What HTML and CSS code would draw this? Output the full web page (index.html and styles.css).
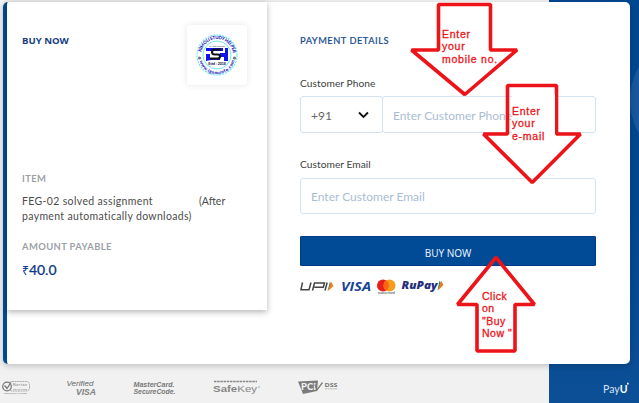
FILE: index.html
```html
<!DOCTYPE html>
<html lang="en">
<head>
    <meta charset="UTF-8">
    <meta name="viewport" content="width=device-width, initial-scale=1.0">
    <title>Payment</title>
    <link rel="stylesheet" href="styles.css">
</head>
<body>
    <div class="page">
        <div class="card">
            <div class="summary">
                <div class="summary-top">
                    <h1>BUY NOW</h1>
                    <div class="merchant-logo">
                        <svg width="42" height="42" viewBox="0 0 42 42">
                            <defs>
                                <path id="arc-top" d="M5 21a16 16 0 0 1 32 0"/>
                                <path id="arc-bottom" d="M2.8 22a18.2 18.2 0 0 0 36.4 0"/>
                            </defs>
                            <circle cx="21" cy="21" r="20" fill="none" stroke="#72e5f5" stroke-width="1.2" stroke-dasharray="2 1"/>
                            <circle cx="21" cy="21" r="14" fill="none" stroke="#72e5f5" stroke-width="1"/>
                            <text class="ring-text" textLength="45"><textPath href="#arc-top" startOffset="3">KIMOLI STUDY HELPER</textPath></text>
                            <text class="ring-text" textLength="47"><textPath href="#arc-bottom" startOffset="5">www.ignouinfo.com</textPath></text>
                            <circle cx="3.5" cy="24" r="1.6" fill="#777"/>
                            <circle cx="38.5" cy="24" r="1.6" fill="#777"/>
                            <path d="M10 14h22v13h-4v-4h-4v3H15l-5 1v-7h4v-3h-4z" fill="#1212ee"/>
                            <path d="M14 17h13v-3h2v5h-5l-2 6h-8z" fill="#fff"/>
                            <path d="M25 15.500h-6q-3 0-3 2.500t3 2.500h3q2 0 2 2t-2 2h-8" fill="none" stroke="#111" stroke-width="2"/>
                            <text class="est" x="21" y="31" text-anchor="middle">Estd : 2018</text>
                            <text class="est-top" x="21" y="12.500" text-anchor="middle">SINCE PERIOD</text>
                        </svg>
                    </div>
                </div>
                <h2>ITEM</h2>
                <p class="item"><span class="item-name">FEG-02 solved assignment</span><span>(After</span><br><span class="item-rest">payment automatically downloads)</span></p>
                <h2 class="amount-title">AMOUNT PAYABLE</h2>
                <div class="amount"><span class="rupee">₹</span>40.0</div>
            </div>

            <form class="details">
                <h3>PAYMENT DETAILS</h3>
                <label class="phone-label">Customer Phone</label>
                <div class="phone-row">
                    <div class="code">
                        <span>+91</span>
                        <svg width="11" height="8" viewBox="0 0 11 8"><path d="M1 1.500l4.500 4.500L10 1.500" fill="none" stroke="#111" stroke-width="1.800"/></svg>
                    </div>
                    <div class="field phone">Enter Customer Phone</div>
                </div>
                <label class="email-label">Customer Email</label>
                <div class="field">Enter Customer Email</div>
                <button type="button">BUY NOW</button>
                <div class="methods">
                    <svg width="146" height="18" viewBox="0 0 146 18">
                        <!-- UPI -->
                        <g fill="none" stroke="#444" stroke-width="1.500">
                            <path d="M2.500 4.500L.9 11.800H9L11 4.500M12.500 12.500L14.500 5h10l-1.200 4.200h-9M25 12.500L27.200 4.500"/>
                        </g>
                        <path d="M30 3.500l1.500 4-4 5.500z" fill="#2b8a4a"/>
                        <path d="M31 3.500l2.500 4.500-5.500 5z" fill="#f07b25"/>
                        <text class="visa" x="41" y="12.500" textLength="30" lengthAdjust="spacingAndGlyphs">VISA</text>
                        <!-- Mastercard -->
                        <circle cx="83" cy="7.500" r="6" fill="#e8201c"/>
                        <circle cx="89.500" cy="7.500" r="6" fill="#f79d1c"/>
                        <path d="M86.250 2.500a6 6 0 0 1 0 10 6 6 0 0 1 0-10z" fill="#fb6415"/>
                        <text class="mc" x="78" y="16" textLength="17" lengthAdjust="spacingAndGlyphs">mastercard</text>
                        <text class="rupay" x="101.500" y="10.500" textLength="36" lengthAdjust="spacingAndGlyphs">RuPay</text>
                        <path d="M139.500 2.500l2 4-4 6z" fill="#2b8a4a"/>
                        <path d="M141 2.500l2.500 4.500-5.500 5.500z" fill="#f07b25"/>
                    </svg>
                </div>
            </form>
        </div>

        <div class="footer">
            <div class="badges">
                <svg width="345" height="20" viewBox="0 0 345 20">
                    <!-- Norton -->
                    <rect x="9" y="2.500" width="20.500" height="9.500" rx="3" fill="none" stroke="#999" stroke-width=".8" stroke-dasharray="2 .6"/>
                    <circle cx="7" cy="7.500" r="4.300" fill="#f1f1f1" stroke="#777" stroke-width="1.200"/>
                    <path d="M4.500 6.500l2.500 3 4-6" fill="none" stroke="#777" stroke-width="1.300"/>
                    <text class="tiny" x="13" y="7" textLength="14">Norton</text>
                    <text class="tiny-sub" x="13" y="10.500" textLength="14">SECURED</text>
                    <text class="tiny-sub" x="4" y="15" textLength="23">powered by VeriSign</text>
                    <text class="verified" x="66.500" y="7" textLength="27" lengthAdjust="spacingAndGlyphs">Verified</text>
                    <text class="verified-visa" x="76" y="15.500" textLength="20" lengthAdjust="spacingAndGlyphs">VISA</text>
                    <text class="secure" x="133.500" y="7.500" textLength="41" lengthAdjust="spacingAndGlyphs">MasterCard.</text>
                    <text class="secure" x="133.500" y="15" textLength="42" lengthAdjust="spacingAndGlyphs">SecureCode.</text>
                    <path d="M214 2.500h43" stroke="#888" stroke-width="1.600" stroke-dasharray="2.500 .7"/>
                    <text class="safekey" x="213" y="13" textLength="44" lengthAdjust="spacingAndGlyphs">Safe<tspan class="key">Key</tspan></text>
                    <path d="M258 8h2" stroke="#999" stroke-width=".8"/>
                    <!-- PCI DSS -->
                    <path d="M298 2.500l20-1-1 10.500-14 3z" fill="#7c7c7c"/>
                    <text class="pci" x="301" y="11" textLength="15" lengthAdjust="spacingAndGlyphs">PCI</text>
                    <path d="M315 5.500l2 5.500 5.500-7.500" fill="none" stroke="#7c7c7c" stroke-width="1.300"/>
                    <text class="dss" x="324.500" y="7.500" textLength="13" lengthAdjust="spacingAndGlyphs">DSS</text>
                    <path d="M325 9.800h12" stroke="#aaa" stroke-width=".8" stroke-dasharray="2 .5"/>
                </svg>
            </div>
            <div class="payu">Pay<b>U</b><svg width="3" height="5" viewBox="0 0 3 5"><path d="M0 .5h2v2H0z" fill="#fff"/></svg></div>
        </div>

        <div class="bg-side">
            <svg width="90" height="403" viewBox="0 0 90 403">
                <circle cx="148" cy="100" r="67" fill="#17579d"/>
            </svg>
        </div>

        <!-- Instruction arrows -->
        <div class="notes">
            <svg class="arrows" width="639" height="403" viewBox="0 0 639 403">
                <path d="M438.500 4.500h52v45.500h26.500L464.800 94.500 411.500 50h27z"/>
                <path d="M507.500 85.500h49v48.500h24L532.200 182.500 483.500 134h24z"/>
                <path d="M496 257.500L534.500 304.500h-19.500v46.500h-38v-46.500h-19.500z"/>
            </svg>
            <span class="note note-phone">Enter<br>your<br>mobile no.</span>
            <span class="note note-email">Enter<br>your<br>e-mail</span>
            <span class="note note-buy">Click<br>on<br>"Buy<br>Now "</span>
        </div>
    </div>
</body>
</html>
```
FILE: styles.css
```css
* {
    box-sizing: border-box;
}
body {
    margin: 0;
    font-family: Lato, "Noto Sans", sans-serif;
    background-color: #f1f1f1;
    overflow: hidden;
}
.page {
    position: relative;
    width: 639px;
    height: 403px;
    padding: 2px 9px 0 3px;
}
.bg-side {
    position: absolute;
    z-index: -1;
    top: 0;
    right: 0;
    width: 90px;
    height: 403px;
    background: linear-gradient(#004791 50%, #0c4f97);
}
.card {
    display: flex;
    height: 362px;
    background-color: white;
    border-left: 4px solid #004a94;
    border-radius: 5px;
    box-shadow: 0 2px 6px rgba(0, 0, 0, 0.2);
}
.summary {
    width: 260px;
    height: 308px;
    padding: 22px 20px 0 15px;
    box-shadow: 0 2px 6px rgba(0, 0, 0, 0.3);
}
.summary-top {
    display: flex;
    justify-content: space-between;
    height: 148px;
}
h1, h2, h3, p {
    margin: 0;
}
h1 {
    padding-top: 11px;
    font: 700 9.6px/12px "Open Sans", sans-serif;
    color: #173f82;
}
.merchant-logo {
    display: flex;
    align-items: center;
    justify-content: center;
    width: 60px;
    height: 60px;
    margin-top: 1px;
    border-radius: 3px;
    box-shadow: 0 0 7px rgba(0, 0, 0, 0.1);
}
.ring-text {
    font: 900 4.5px Lato, sans-serif;
    fill: #1010b8;
}
.est {
    font: 900 3.5px Lato, sans-serif;
    fill: #181850;
}
.est-top {
    font: 2.3px Lato, sans-serif;
    fill: #444;
}
h2 {
    font-size: 9.4px;
    line-height: 14px;
    letter-spacing: 0.4px;
    color: #9b9fa8;
}
.item {
    margin-top: 8px;
    font-size: 10.5px;
    line-height: 15px;
    color: #4c4c4c;
    white-space: nowrap;
}
.item-name {
    display: inline-block;
    width: 177px;
    letter-spacing: 0.35px;
}
.item-rest {
    letter-spacing: 0.33px;
}
.amount-title {
    margin-top: 16px;
}
.amount {
    margin-top: 7px;
    font: 500 14px/18px Lato, sans-serif;
    color: #0b3a88;
    -webkit-text-stroke: 0.2px #0b3a88;
}
.rupee {
    font: 12px "Noto Sans", sans-serif;
    -webkit-text-stroke: 0;
}
.details {
    display: flex;
    flex-direction: column;
    width: 296px;
    margin-left: 33px;
    padding-top: 32px;
}
h3 {
    font-size: 9.3px;
    font-weight: 500;
    line-height: 14px;
    letter-spacing: 0.5px;
    color: #174d91;
    -webkit-text-stroke: 0.15px #174d91;
}
label {
    font-size: 10.2px;
    line-height: 14px;
    letter-spacing: 0.05px;
    color: #3e3e3e;
}
.phone-label {
    margin-top: 28px;
}
.phone-row {
    display: flex;
    margin-top: 6px;
}
.code, .field {
    display: flex;
    align-items: center;
    height: 37px;
    padding: 1px 10px 0;
    border: 1px solid #d4e2f1;
    border-radius: 3px;
    font-size: 12px;
    color: #a9bdd5;
    white-space: nowrap;
}
.code {
    justify-content: space-between;
    width: 83px;
    padding-right: 13px;
    color: #666;
}
.phone {
    width: 214px;
    margin-left: -1px;
}
.email-label {
    margin-top: 24px;
}
.email-label + .field {
    margin-top: 7px;
    height: 36px;
}
button {
    height: 30px;
    margin-top: 22px;
    padding: 3px 0 0;
    border: 1px solid #003b86;
    border-radius: 1px;
    background-color: #004a96;
    color: #e9f1fa;
    font: 10px "Noto Sans", sans-serif;
}
.methods {
    height: 18px;
    margin-top: 12px;
}
.methods svg {
    display: block;
}
.visa {
    font: italic 700 13px "Open Sans", sans-serif;
    fill: #174493;
}
.mc {
    font: 3.5px Lato, sans-serif;
    fill: #333;
}
.rupay {
    font: italic 800 11px "Open Sans", sans-serif;
    fill: #272f7c;
}
.footer {
    display: flex;
    justify-content: space-between;
    padding-top: 15px;
    margin-left: -3px;
}
.tiny {
    font: 3.5px Lato, sans-serif;
    fill: #777;
}
.tiny-sub {
    font: 2.5px Lato, sans-serif;
    fill: #777;
}
.verified {
    font: italic 7.5px "Liberation Sans", sans-serif;
    fill: #666;
}
.verified-visa {
    font: italic 700 9px "Liberation Sans", sans-serif;
    fill: #808080;
}
.secure {
    font: italic 700 7.5px "Liberation Sans", sans-serif;
    fill: #777;
}
.safekey {
    font: 700 9.5px "Liberation Sans", sans-serif;
    fill: #858585;
}
.key {
    font-weight: 400;
}
.pci {
    font: 900 9px Lato, sans-serif;
    fill: #f1f1f1;
}
.dss {
    font: 700 6px "Open Sans", sans-serif;
    fill: #777;
}
.payu {
    display: flex;
    width: 27px;
    padding-top: 3px;
    color: #d5e2f0;
    font: 10.5px/14px Lato, sans-serif;
}
.payu b {
    color: white;
}
.notes {
    position: absolute;
    top: 0;
    left: 0;
}
.arrows {
    position: absolute;
    top: 0;
    left: 0;
    fill: none;
    stroke: #ed1419;
    stroke-width: 3.6;
    stroke-linejoin: bevel;
}
.note {
    position: absolute;
    color: #ed1419;
    font: 10.5px/12.4px "Liberation Sans", sans-serif;
    letter-spacing: 0.75px;
    -webkit-text-stroke: 0.3px #ed1419;
    white-space: nowrap;
}
.note-phone {
    top: 28px;
    left: 442px;
}
.note-email {
    top: 94px;
    left: 512px;
    width: 43px;
    padding-top: 11px;
    background-color: white;
}
.note-buy {
    top: 290px;
    left: 482px;
    letter-spacing: 0.5px;
}
```
